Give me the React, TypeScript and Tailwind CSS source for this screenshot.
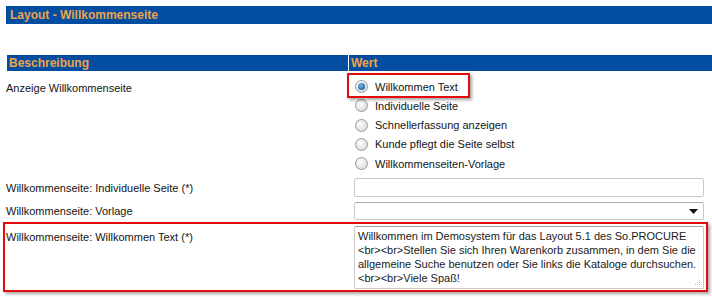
import React from "react";

function Radio({ checked }: { checked?: boolean }) {
  return (
    <span className="w-[13px] h-[13px] rounded-full border border-[#9a9a9a] bg-[radial-gradient(circle_at_40%_35%,#ffffff,#d0d0d0)] flex items-center justify-center shrink-0">
      {checked && (
        <span className="w-[7px] h-[7px] rounded-full bg-[radial-gradient(circle_at_40%_35%,#6fb6ea,#0a4c8c)]" />
      )}
    </span>
  );
}

const options = [
  "Willkommen Text",
  "Individuelle Seite",
  "Schnellerfassung anzeigen",
  "Kunde pflegt die Seite selbst",
  "Willkommenseiten-Vorlage",
];

export default function App() {
  return (
    <div className="relative w-[712px] h-[297px] bg-white overflow-hidden pt-[6px] font-['Liberation_Sans',Arial,sans-serif] text-[11px] leading-[14px] text-[#141414]">
      <div className="ml-[6px] h-[18px] bg-[#034ea0] flex items-center pl-[4px] font-bold text-[12px] text-[#eea24a]">
        Layout - Willkommenseite
      </div>

      <div className="mt-[31px] ml-[7px] h-[16px] bg-[#034ea0] flex items-center font-bold text-[12px] text-[#eea24a]">
        <div className="w-[342px] h-full pl-[2px] border-r border-white flex items-center">Beschreibung</div>
        <div className="pl-[2px]">Wert</div>
      </div>

      <div className="flex">
        <div className="w-[354px] pl-[6px] pt-[10px]">Anzeige Willkommenseite</div>
        <div className="pt-[6px] flex flex-col">
          {options.map((o, i) => (
            <div key={o} className="h-[19.25px] flex items-center gap-[7px] pl-[1px]">
              <Radio checked={i === 0} />
              <span>{o}</span>
            </div>
          ))}
        </div>
      </div>

      <div className="flex items-center mt-[5px]">
        <div className="w-[354px] pl-[6px]">Willkommenseite: Individuelle Seite (*)</div>
        <div className="w-[350px] h-[19px] border border-[#c9c9c9] rounded-[2px] bg-white" />
      </div>

      <div className="flex items-center mt-[5px]">
        <div className="w-[354px] pl-[6px]">Willkommenseite: Vorlage</div>
        <div className="w-[350px] h-[18px] border border-[#c9c9c9] border-t-[#a9a9a9] rounded-[2px] bg-white flex items-center justify-end pr-[5px]">
          <svg width="9" height="5" viewBox="0 0 9 5">
            <path d="M0 0H9L4.5 5Z" fill="#111" />
          </svg>
        </div>
      </div>

      <div className="flex items-start mt-[6px]">
        <div className="w-[354px] pl-[6px] pt-[4px]">Willkommenseite: Willkommen Text (*)</div>
        <div className="relative w-[350px] h-[63px] border border-[#c9c9c9] border-t-[#9f9f9f] rounded-[2px] bg-white pl-[3px] pt-[2px] text-[11px] leading-[14px] text-[#1a1a1a] whitespace-nowrap">
          Willkommen im Demosystem für das Layout 5.1 des So.PROCURE
          <br />
          &lt;br&gt;&lt;br&gt;Stellen Sie sich Ihren Warenkorb zusammen, in dem Sie die
          <br />
          allgemeine Suche benutzen oder Sie links die Kataloge durchsuchen.
          <br />
          &lt;br&gt;&lt;br&gt;Viele Spaß!
          <svg className="absolute right-[2px] bottom-[2px]" width="7" height="7" viewBox="0 0 7 7">
            <rect x="5" y="1" width="1" height="1" fill="#b0b0b0" />
            <rect x="3" y="3" width="1" height="1" fill="#b0b0b0" />
            <rect x="5" y="3" width="1" height="1" fill="#b0b0b0" />
            <rect x="1" y="5" width="1" height="1" fill="#b0b0b0" />
            <rect x="3" y="5" width="1" height="1" fill="#b0b0b0" />
            <rect x="5" y="5" width="1" height="1" fill="#b0b0b0" />
          </svg>
        </div>
      </div>

      <div className="absolute left-[347px] top-[73px] w-[123px] h-[25px] border-2 border-[#e30b0b] shadow-[2px_2px_3px_rgba(0,0,0,0.35)] pointer-events-none" />
      <div className="absolute left-[3px] top-[222px] w-[705px] h-[70px] border-2 border-[#e30b0b] shadow-[2px_2px_3px_rgba(0,0,0,0.35)] pointer-events-none" />
    </div>
  );
}
